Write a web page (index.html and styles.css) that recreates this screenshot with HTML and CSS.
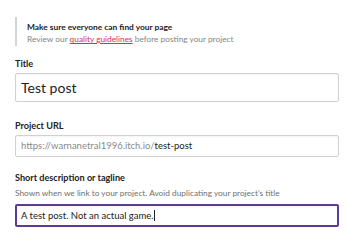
FILE: index.html
```html
<!DOCTYPE html>
<html lang="en">
<head>
  <meta charset="UTF-8">
  <title>Edit project</title>
  <link rel="stylesheet" href="styles.css">
</head>
<body>
  <div class="form">
    <div class="notice">
      <div class="notice-title">Make sure everyone can find your page</div>
      <div class="notice-text">Review our <a href="#">quality guidelines</a> before posting your project</div>
    </div>

    <div class="field field-title">
      <div class="label">Title</div>
      <div class="input input-big">Test post</div>
    </div>

    <div class="field field-url">
      <div class="label">Project URL</div>
      <div class="input"><span class="prefix">https://warnanetral1996.itch.io/</span>test-post</div>
    </div>

    <div class="field field-desc">
      <div class="label">Short description or tagline</div>
      <div class="sub">Shown when we link to your project. Avoid duplicating your project's title</div>
      <div class="input input-focus">A test post. Not an actual game.<span class="caret"></span></div>
    </div>
  </div>
</body>
</html>
```

FILE: styles.css
```css
/* General */
body {
  margin: 0;
  background-color: #fff;
  font-family: 'Lato', 'Liberation Sans', sans-serif;
  color: #222;
}

.form {
  padding: 17px 8px 0 15px;
}

/* Aviso */
.notice {
  border-left: 2px solid #d4d4d4;
  padding: 4px 0 1px 10px;
}

.notice-title {
  font-size: 8.4px;
  font-weight: bold;
  line-height: 12px;
}

.notice-text {
  font-size: 8.3px;
  line-height: 12px;
  color: #858585;
}

.notice-text a {
  color: #da2c59;
}

/* Campos */
.field-title {
  margin-top: 12px;
}

.field-url {
  margin-top: 18px;
}

.field-desc {
  margin-top: 15px;
}

.label {
  font-size: 9.1px;
  font-weight: bold;
  line-height: 12px;
  margin-bottom: 3px;
}

.sub {
  font-size: 8.3px;
  line-height: 12px;
  color: #707070;
  margin-top: 1px;
  margin-bottom: 5px;
}

.input {
  border: 1px solid #d0d0d0;
  border-radius: 2px;
  box-shadow: inset 0 1px 2px rgba(0, 0, 0, 0.05);
  height: 20px;
  line-height: 20px;
  padding: 0 5px;
  font-size: 9.5px;
  color: #222;
}

.input-big {
  height: 27px;
  line-height: 27px;
  font-size: 14px;
}

.prefix {
  color: #8a8a8a;
}

.input-focus {
  border: 2px solid #5b3b94;
  height: 19px;
  line-height: 19px;
  padding: 0 4px;
}

.caret {
  display: inline-block;
  width: 1px;
  height: 11px;
  background-color: #222;
  vertical-align: -2px;
}
```
